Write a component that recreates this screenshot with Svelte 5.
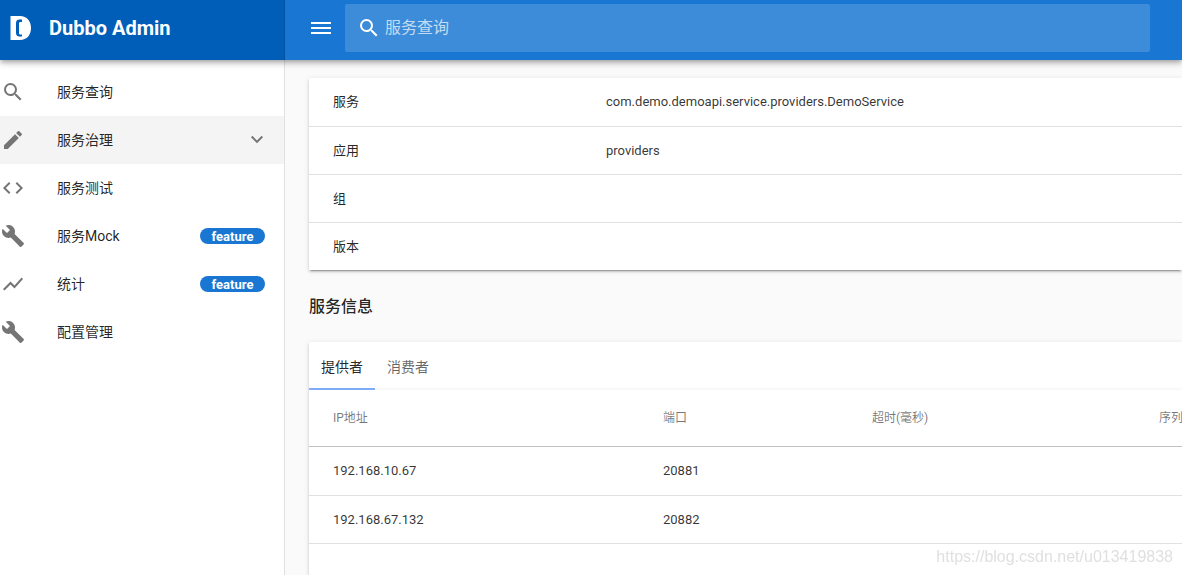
<script>
  let search = $state('');
  let activeTab = $state('providers');

  const menu = [
    { title: '服务查询', icon: 'search' },
    { title: '服务治理', icon: 'edit', active: true, group: true },
    { title: '服务测试', icon: 'code' },
    { title: '服务Mock', icon: 'build', badge: 'feature' },
    { title: '统计', icon: 'trend', badge: 'feature' },
    { title: '配置管理', icon: 'build' },
  ];

  const icons = {
    search:
      'M15.5 14h-.79l-.28-.27A6.47 6.47 0 0 0 16 9.5 6.5 6.5 0 1 0 9.5 16c1.61 0 3.09-.59 4.23-1.57l.27.28v.79l5 4.99L20.49 19l-4.99-5zm-6 0C7.01 14 5 11.99 5 9.5S7.01 5 9.5 5 14 7.01 14 9.5 11.99 14 9.5 14z',
    edit: 'M3 17.25V21h3.75L17.81 9.94l-3.75-3.75L3 17.25zM20.71 7.04a1 1 0 0 0 0-1.41l-2.34-2.34a1 1 0 0 0-1.41 0l-1.83 1.83 3.75 3.75 1.83-1.83z',
    code: 'M9.4 16.6L4.8 12l4.6-4.6L8 6l-6 6 6 6 1.4-1.4zm5.2 0l4.6-4.6-4.6-4.6L16 6l6 6-6 6-1.4-1.4z',
    build:
      'M22.7 19l-9.1-9.1c.9-2.3.4-5-1.5-6.9-2-2-5-2.4-7.4-1.3L9 6 6 9 1.6 4.7C.4 7.1.9 10.1 2.9 12.1c1.9 1.9 4.6 2.4 6.9 1.5l9.1 9.1c.4.4 1 .4 1.4 0l2.3-2.3c.5-.4.5-1.1.1-1.4z',
    trend: 'M3.5 18.49l6-6.01 4 4L22 6.92l-1.41-1.41-7.09 7.97-4-4L2 16.99z',
    menu: 'M2 18h20v-2H2v2zm0-5h20v-2H2v2zm0-7v2h20V6H2z',
    chevron: 'M7.41 7.84L12 12.42l4.59-4.58L18 9.25l-6 6-6-6z',
  };

  const basic = [
    { label: '服务', value: 'com.demo.demoapi.service.providers.DemoService' },
    { label: '应用', value: 'providers' },
    { label: '组', value: '' },
    { label: '版本', value: '' },
  ];

  const tabs = [
    { id: 'providers', label: '提供者' },
    { id: 'consumers', label: '消费者' },
  ];

  const providers = [
    { ip: '192.168.10.67', port: 20881, timeout: '', serialization: '' },
    { ip: '192.168.67.132', port: 20882, timeout: '', serialization: '' },
  ];
</script>

{#snippet icon(name)}
  <svg class="icon" viewBox="0 0 24 24" aria-hidden="true"><path d={icons[name]} /></svg>
{/snippet}

<div class="app">
  <header>
    <div class="brand">
      <svg class="logo" viewBox="0 0 22 24" aria-hidden="true">
        <path
          fill-rule="evenodd"
          d="M.5 0H10C17 0 21 5 21 12S17 24 10 24H.5zM12 3.500H9.500C7 3.500 6 5 6 7.500V16.500C6 19 7 20.500 9.500 20.500H12V18.500H10.500C9.500 18.500 9 18 9 17V7.500C9 6.500 9.500 6 10.500 6H12z"
        />
      </svg>
      <span>Dubbo Admin</span>
    </div>
    <div class="toolbar">
      <button class="menu-btn" aria-label="menu">{@render icon('menu')}</button>
      <label class="search">
        {@render icon('search')}
        <input type="text" placeholder="服务查询" aria-label="服务查询" bind:value={search} />
      </label>
    </div>
  </header>

  <div class="body">
    <nav>
      {#each menu as item}
        <a href="#/" class="item" class:active={item.active}>
          {@render icon(item.icon)}
          <span class="title">{item.title}</span>
          {#if item.badge}
            <span class="badge">{item.badge}</span>
          {/if}
          {#if item.group}
            <span class="arrow">{@render icon('chevron')}</span>
          {/if}
        </a>
      {/each}
    </nav>

    <main>
      <section class="card">
        <table class="basic">
          <tbody>
            {#each basic as row}
              <tr>
                <th scope="row">{row.label}</th>
                <td>{row.value}</td>
              </tr>
            {/each}
          </tbody>
        </table>
      </section>

      <h2>服务信息</h2>

      <div class="card tabs" role="tablist">
        {#each tabs as tab}
          <button
            role="tab"
            class="tab"
            class:selected={activeTab === tab.id}
            aria-selected={activeTab === tab.id}
            onclick={() => (activeTab = tab.id)}
          >
            {tab.label}
          </button>
        {/each}
      </div>

      <section class="card grow">
        <table class="detail">
          <thead>
            <tr>
              <th class="ip">IP地址</th>
              <th class="port">端口</th>
              <th class="timeout">超时(毫秒)</th>
              <th>序列</th>
            </tr>
          </thead>
          <tbody>
            {#each activeTab === 'providers' ? providers : [] as row}
              <tr>
                <td>{row.ip}</td>
                <td>{row.port}</td>
                <td>{row.timeout}</td>
                <td>{row.serialization}</td>
              </tr>
            {/each}
          </tbody>
        </table>
      </section>
    </main>
  </div>

  <div class="watermark">https://blog.csdn.net/u013419838</div>
</div>

<style>
  .app {
    display: flex;
    flex-direction: column;
    height: 100vh;
    overflow: hidden;
    background: #fafafa;
    color: rgba(0, 0, 0, 0.87);
    font-family: Roboto, 'Noto Sans CJK SC', sans-serif;
    font-size: 14px;
    line-height: 20px;
  }

  .app :global(*) {
    box-sizing: border-box;
  }

  .icon {
    width: 24px;
    height: 24px;
    flex: none;
    display: block;
    fill: currentColor;
  }

  button {
    padding: 0;
    border: 0;
    background: none;
    color: inherit;
    font: inherit;
    cursor: pointer;
  }

  header {
    display: flex;
    flex: none;
    height: 60px;
    background: #1976d2;
    color: #fff;
    box-shadow:
      0 2px 4px -1px rgba(0, 0, 0, 0.2),
      0 4px 5px 0 rgba(0, 0, 0, 0.14),
      0 1px 10px 0 rgba(0, 0, 0, 0.12);
    position: relative;
    z-index: 2;
  }

  .brand {
    display: flex;
    align-items: center;
    gap: 17px;
    width: 285px;
    flex: none;
    padding: 0 10px 4px;
    border-right: 1px solid #0052a1;
    background: #005eb8;
    font-size: 20px;
    font-weight: 700;
  }

  .logo {
    width: 22px;
    height: 24px;
    fill: #fff;
  }

  .toolbar {
    display: flex;
    flex: 1;
    align-items: center;
    gap: 12px;
    padding: 0 32px 4px 24px;
  }

  .search {
    display: flex;
    flex: 1;
    align-items: center;
    gap: 4px;
    height: 48px;
    padding: 0 12px;
    border-radius: 2px;
    background: rgba(255, 255, 255, 0.16);
  }

  .search input {
    flex: 1;
    min-width: 0;
    padding: 0;
    border: 0;
    outline: none;
    background: none;
    color: #fff;
    font: inherit;
    font-size: 16px;
  }

  .search input::placeholder {
    color: rgba(255, 255, 255, 0.7);
    opacity: 1;
  }

  .body {
    display: flex;
    flex: 1;
    min-height: 0;
  }

  nav {
    width: 285px;
    flex: none;
    padding-top: 8px;
    border-right: 1px solid #e0e0e0;
    background: #fff;
  }

  .item {
    display: flex;
    align-items: center;
    height: 48px;
    padding: 0 19px 0 1px;
    color: inherit;
    text-decoration: none;
  }

  .item.active {
    background: #f4f4f4;
  }

  .item .icon {
    color: #757575;
  }

  .title {
    flex: 1;
    margin-left: 32px;
  }

  .badge {
    width: 65px;
    height: 16px;
    border-radius: 8px;
    background: #1976d2;
    color: #fff;
    font-size: 13px;
    font-weight: 700;
    line-height: 18px;
    text-align: center;
  }

  .arrow {
    margin-right: -4px;
  }

  main {
    display: flex;
    flex: 1;
    flex-direction: column;
    min-width: 0;
    padding: 18px 0 0 24px;
    overflow: hidden;
  }

  .card {
    background: #fff;
    box-shadow:
      0 3px 1px -2px rgba(0, 0, 0, 0.2),
      0 2px 2px 0 rgba(0, 0, 0, 0.14),
      0 1px 5px 0 rgba(0, 0, 0, 0.12);
  }

  .grow {
    flex: 1;
  }

  table {
    width: 100%;
    border-collapse: separate;
    border-spacing: 0;
    table-layout: fixed;
    font-size: 13px;
  }

  th,
  td {
    height: 48px;
    padding: 0 0 0 24px;
    font-weight: 400;
    text-align: left;
    white-space: nowrap;
  }

  td {
    color: rgba(0, 0, 0, 0.8);
  }

  tbody tr:not(:first-child) > * {
    border-top: 1px solid #e0e0e0;
  }

  .basic th {
    width: 273px;
  }

  h2 {
    margin: 25px 0 23px;
    font-size: 16px;
    font-weight: 500;
    line-height: 24px;
  }

  .tabs {
    display: flex;
    flex: none;
    height: 48px;
  }

  .tab {
    padding: 4px 12px 0;
    border-bottom: 2px solid transparent;
    color: rgba(0, 0, 0, 0.6);
  }

  .tab.selected {
    border-bottom-color: #82b1ff;
    color: rgba(0, 0, 0, 0.87);
  }

  .detail thead th {
    height: 57px;
    border-bottom: 1px solid #c2c2c2;
    color: rgba(0, 0, 0, 0.54);
    font-size: 12px;
  }

  .detail tbody tr:last-child > * {
    height: 49px;
    border-bottom: 1px solid #e0e0e0;
  }

  .detail .ip {
    width: 330px;
  }

  .detail .port {
    width: 209px;
  }

  .detail .timeout {
    width: 287px;
  }

  .watermark {
    position: fixed;
    right: 9px;
    bottom: 8px;
    color: #e0e0e0;
    font-family: 'Liberation Sans', sans-serif;
    font-size: 16px;
    pointer-events: none;
  }

  :global(body) {
    margin: 0;
  }
</style>
